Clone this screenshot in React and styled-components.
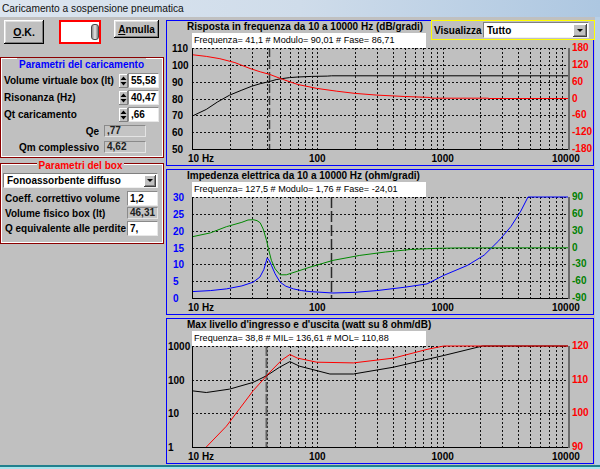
import styled, { createGlobalStyle } from "styled-components";

const FONT = `"Liberation Sans", Arial, sans-serif`;

const GlobalStyle = createGlobalStyle`
  html, body { margin: 0; padding: 0; background: #c0c0c0; }
  body { font-family: ${FONT}; }
  *, *::before, *::after { box-sizing: border-box; }
`;

const Window = styled.div`
  width: 600px;
  height: 469px;
  display: flex;
  flex-direction: column;
  overflow: hidden;
  background: #c0c0c0;
  color: #000;
  font-family: ${FONT};
`;

const TitleBar = styled.div`
  flex: none;
  height: 17px;
  display: flex;
  align-items: center;
  padding-left: 2px;
  font-size: 10.2px;
  color: #111;
  background: linear-gradient(to right, #dce5ef 0%, #cfdcea 50%, #adc7e1 100%);
`;

const Body = styled.div`
  flex: 1;
  min-height: 0;
  display: flex;
  gap: 2px;
  padding: 3px 1px 0 0;
  border-right: 5px solid #b7cfe7;
`;

const BottomEdge = styled.div`
  flex: none;
  height: 4px;
  border-top: 2px solid #21808d;
  background: #a9e4ec;
`;

/* ---------- left column ---------- */

const LeftColumn = styled.div`
  width: 164px;
  flex: none;
  display: flex;
  flex-direction: column;
`;

const ButtonRow = styled.div`
  height: 37px;
  display: flex;
  align-items: flex-start;
  padding-left: 4px;
`;

const ClassicButton = styled.button`
  width: ${p => p.$w}px;
  height: ${p => p.$h}px;
  margin: 0 0 0 ${p => p.$ml || 0}px;
  padding: 0;
  border: none;
  background: #c0c0c0;
  box-shadow: inset -1px -1px #000, inset 1px 1px #fff, inset -2px -2px #808080, inset 2px 2px #dfdfdf;
  font: bold ${p => p.$fs || 10}px ${FONT};
  color: #000;
  u { text-decoration: underline; }
`;

const RedField = styled.div`
  width: 42px;
  height: 24px;
  margin-left: 15px;
  border: 2px solid #ff0000;
  background: #fff;
  display: flex;
  align-items: center;
  justify-content: flex-end;
`;

const Knob = styled.div`
  width: 8px;
  height: 16px;
  border: 1px solid #4a4a4a;
  border-radius: 3px;
  background: linear-gradient(to right, #8c8c8c, #e6e6e6 50%, #7a7a7a);
`;

const GroupBox = styled.div`
  height: ${p => p.$h}px;
  margin-top: ${p => p.$mt || 0}px;
  padding: 0 ${p => p.$pr}px 0 ${p => p.$pl}px;
  border: 1px solid #8b0000;
  box-shadow: inset 1px 1px #fff, inset -1px -1px #fff;
  display: flex;
  flex-direction: column;
`;

const Caption = styled.div`
  align-self: center;
  height: 13px;
  line-height: 13px;
  margin-top: ${p => p.$mt || 0}px;
  margin-bottom: ${p => p.$mb || 0}px;
  padding: 0 2px;
  background: #c0c0c0;
  color: ${p => p.$color};
  font-size: 10px;
  font-weight: bold;
  white-space: nowrap;
`;

const FieldRow = styled.div`
  height: ${p => p.$h}px;
  margin-top: ${p => p.$mt || 0}px;
  padding-right: ${p => p.$pr || 0}px;
  display: flex;
  align-items: center;
  justify-content: ${p => (p.$end ? "flex-end" : "flex-start")};
`;

const Label = styled.span`
  flex: ${p => (p.$grow ? "1 1 0" : "none")};
  margin-left: ${p => p.$ml || 0}px;
  font-size: 10px;
  font-weight: bold;
  white-space: nowrap;
`;

const SpinBox = styled.span`
  width: 9px;
  height: 14px;
  flex: none;
  display: block;
  background: #c0c0c0;
  box-shadow: inset -1px -1px #808080, inset 1px 1px #fff;
  svg { display: block; }
`;

const EditBox = styled.div`
  width: 31px;
  height: 15px;
  flex: none;
  background: #fff;
  border: 1px solid #8a8a8a;
  border-right-color: #e8e8e8;
  border-bottom-color: #e8e8e8;
  padding-left: 2px;
  font-size: 10px;
  font-weight: bold;
  line-height: 13px;
  white-space: nowrap;
`;

const ValueBox = styled.div`
  width: ${p => p.$w}px;
  height: 12px;
  flex: none;
  margin-left: ${p => p.$ml || 0}px;
  background: #c4c4c4;
  border: 1px solid #8a8a8a;
  border-right-color: #e4e4e4;
  border-bottom-color: #e4e4e4;
  padding-left: 2px;
  font-size: 10px;
  font-weight: bold;
  line-height: 10px;
  color: #202020;
`;

const Combo = styled.div`
  width: ${p => p.$w}px;
  height: ${p => p.$h}px;
  flex: none;
  margin-top: ${p => p.$mt || 0}px;
  display: flex;
  align-items: center;
  justify-content: space-between;
  background: #fff;
  border: 1px solid #808080;
  border-right-color: #f0f0f0;
  border-bottom-color: #f0f0f0;
  padding: 0 1px 0 3px;
  font-size: 10px;
  font-weight: bold;
  white-space: nowrap;
`;

const ComboArrow = styled.span`
  width: ${p => p.$w}px;
  height: ${p => p.$h}px;
  flex: none;
  display: flex;
  align-items: center;
  justify-content: center;
  background: #c0c0c0;
  box-shadow: inset -1px -1px #404040, inset 1px 1px #fff, inset -2px -2px #808080;
  &::after {
    content: "";
    border-left: 3px solid transparent;
    border-right: 3px solid transparent;
    border-top: 3px solid #000;
  }
`;

/* ---------- charts ---------- */

const RightColumn = styled.div`
  width: 428px;
  flex: none;
  display: flex;
  flex-direction: column;
  gap: 3px;
`;

const ChartPanel = styled.section`
  height: 146px;
  flex: none;
  border: 1px solid #0000ff;
  display: grid;
  grid-template-columns: 426px;
  grid-template-rows: 144px;
  & > * { grid-area: 1 / 1; }
`;

const PanelTitle = styled.h2`
  margin: 0 0 0 20px;
  justify-self: start;
  align-self: start;
  font-size: 10px;
  font-weight: bold;
  line-height: 12px;
  white-space: nowrap;
`;

const Readout = styled.div`
  justify-self: start;
  align-self: start;
  margin: 12px 0 0 25px;
  width: 234px;
  height: 15px;
  padding-left: 2px;
  background: #fff;
  font-size: 9.1px;
  line-height: 15px;
  white-space: nowrap;
`;

const ViewBox = styled.div`
  justify-self: end;
  align-self: start;
  margin: -1px -2px 0 0;
  width: 164px;
  height: 20px;
  border: 1px solid #ffff00;
  background: #c0c0c0;
  display: flex;
  align-items: center;
  justify-content: space-between;
  padding: 0 5px 0 2px;
  font-size: 10px;
  font-weight: bold;
`;

const ChartSvg = styled.svg`
  display: block;
  width: 426px;
  height: 144px;
  font-family: ${FONT};
  font-weight: bold;
  font-size: 10px;
`;

const X0 = 25, X1 = 401, Y0 = 27, Y1 = 128;
const fx = f => X0 + ((X1 - X0) * Math.log10(f / 10)) / 3;
const ty = t => Y1 - (Y1 - Y0) * t;
const db = (lo, hi) => pts => pts.map(([f, v]) => [f, (v - lo) / (hi - lo)]);

const charts = [
  {
    title: "Risposta in frequenza da 10 a 10000 Hz (dB/gradi)",
    readout: "Frequenza= 41,1 # Modulo= 90,01 # Fase= 86,71",
    view: true,
    leftX: 5,
    left: ["110", "100", "90", "80", "70", "60", "50"],
    right: ["180", "120", "60", "0", "-60", "-120", "-180"],
    leftColor: "#000",
    rightColor: "#ff0000",
    cursor: { f: 41.1, color: "#3a3a3a", width: 1.5, dash: "9 3" },
    series: [
      {
        color: "#000",
        pts: db(50, 110)([
          [10, 69.5], [13, 73.5], [16, 78], [20, 82], [25, 85], [30, 87.3], [35, 88.8],
          [41, 90], [47, 91.2], [53, 91.9], [60, 92.4], [70, 92.8], [90, 93.1], [120, 93.3],
          [130, 93.5], [10000, 93.5],
        ]),
      },
      {
        color: "#ff0000",
        pts: db(-180, 180)([
          [10, 156], [13, 150], [16.7, 142], [22, 128], [29, 107], [35, 95], [41.7, 86],
          [53, 68], [70, 50], [99, 36], [143, 26], [200, 18], [298, 12], [500, 7], [780, 4],
          [820, 1], [2300, 1], [2350, 0], [10000, 0],
        ]),
      },
    ],
  },
  {
    title: "Impedenza elettrica da 10 a 10000 Hz (ohm/gradi)",
    readout: "Frequenza= 127,5 # Modulo= 1,76 # Fase= -24,01",
    leftX: 6,
    left: ["30", "25", "20", "15", "10", "5", "0"],
    right: ["90", "60", "30", "0", "-30", "-60", "-90"],
    leftColor: "#0000ff",
    rightColor: "#008000",
    cursor: { f: 127.5, color: "#2a2a2a", width: 1.5, dash: "11 3" },
    series: [
      {
        color: "#0000ff",
        pts: db(0, 30)([
          [10, 1.9], [14, 2.2], [18.8, 2.7], [25, 3.6], [30.7, 4.7], [34.8, 6.2], [37.5, 8.5],
          [39.8, 11.9], [41.5, 11], [43, 9.7], [46, 7.2], [50.5, 4.7], [56, 3.5], [64.5, 2.7],
          [75, 2.2], [87.5, 1.9], [133, 1.5], [200, 1.7], [298, 2.2], [500, 3.2], [750, 4.2],
          [1020, 6.7], [1580, 9.7], [2140, 12.7], [2800, 17], [3500, 21.2], [4200, 25.8],
          [4800, 30], [10000, 30],
        ]),
      },
      {
        color: "#008800",
        pts: db(-90, 90)([
          [10, 19], [14, 26], [18.8, 37], [25, 45], [28, 49], [30.7, 49.5], [33, 48], [35, 44],
          [37, 33], [39.3, 13], [41, -5], [43, -23], [46, -38], [50.5, -48.7], [56.5, -48.7],
          [70, -42], [87.5, -35], [133, -23], [218, -14], [350, -8], [553, -3.6], [900, -1.5],
          [1380, -0.7], [10000, -0.5],
        ]),
      },
    ],
  },
  {
    title: "Max livello d'ingresso e d'uscita (watt su 8 ohm/dB)",
    readout: "Frequenza= 38,8 # MIL= 136,61 # MOL= 110,88",
    leftX: 1,
    left: ["1000", "100", "10", "1"],
    right: ["120", "110", "100", "90"],
    leftColor: "#000",
    rightColor: "#ff0000",
    cursor: { f: 38.8, color: "#606060", width: 2, dash: "10 2" },
    series: [
      {
        color: "#000",
        pts: [
          [10, 0.556], [13, 0.54], [20, 0.573], [30.7, 0.64], [39.4, 0.706], [50, 0.79],
          [60.4, 0.846], [72, 0.8], [87.5, 0.773], [126, 0.723], [194, 0.723], [405, 0.79],
          [1020, 0.906], [2080, 1], [10000, 1],
        ],
      },
      {
        color: "#ff0000",
        pts: [
          [13, 0], [18.8, 0.206], [24, 0.38], [30.7, 0.556], [41.7, 0.74], [52, 0.86],
          [60.4, 0.916], [69.3, 0.88], [99, 0.84], [194, 0.833], [405, 0.88], [750, 0.966],
          [1020, 1], [10000, 1],
        ],
      },
    ],
  },
];

function Spin() {
  return (
    <SpinBox>
      <svg width="9" height="14" viewBox="0 0 9 14">
        <path d="M1.5 6 L4.5 2.5 L7.5 6 Z M1.5 8 L4.5 11.5 L7.5 8 Z" fill="#000" />
      </svg>
    </SpinBox>
  );
}

function Chart({ chart }) {
  const div = chart.left.length - 1;
  const step = (Y1 - Y0) / div;
  const rows = chart.left.map((_, i) => Y0 + i * step);
  const vLines = [];
  [10, 100, 1000].forEach(base => {
    for (let m = base === 10 ? 2 : 1; m <= 9; m++) vLines.push(Math.round(fx(m * base)) + 0.5);
  });
  const cx = Math.round(fx(chart.cursor.f)) + 0.5;
  return (
    <ChartSvg viewBox="0 0 426 144">
      <g stroke="#111" strokeDasharray="2 2" shapeRendering="crispEdges">
        {rows.slice(0, div).map(y => (
          <line key={y} x1={X0} x2={X1} y1={Math.round(y) + 0.5} y2={Math.round(y) + 0.5} />
        ))}
        {vLines.map(x => (
          <line key={x} x1={x} x2={x} y1={Y0} y2={Y1} />
        ))}
      </g>
      <line
        x1={cx} x2={cx} y1={Y0} y2={Y1}
        stroke={chart.cursor.color}
        strokeWidth={chart.cursor.width}
        strokeDasharray={chart.cursor.dash}
      />
      {chart.series.map(s => (
        <polyline
          key={s.color}
          points={s.pts.map(([f, t]) => `${fx(f).toFixed(1)},${ty(t).toFixed(1)}`).join(" ")}
          fill="none"
          stroke={s.color}
          strokeWidth="1"
        />
      ))}
      <g shapeRendering="crispEdges">
        <line x1={X0 + 0.5} x2={X0 + 0.5} y1={Y0} y2={Y1 + 1} stroke="#000" />
        <line x1={X0} x2={X1} y1={Y1 + 0.5} y2={Y1 + 0.5} stroke="#000" />
        <line x1={X1 + 1} x2={X1 + 1} y1={Y0} y2={Y1 + 1} stroke="#6b6b6b" strokeWidth="2" />
      </g>
      {chart.left.map((t, i) => (
        <text key={"l" + t} x={chart.leftX} y={rows[i] + 4} fill={chart.leftColor}>{t}</text>
      ))}
      {chart.right.map((t, i) => (
        <text key={"r" + t} x={405} y={rows[i] + 3} fill={chart.rightColor}>{t}</text>
      ))}
      <text x={21} y={140.5}>10 Hz</text>
      <text x={fx(100)} y={140.5} textAnchor="middle">100</text>
      <text x={fx(1000)} y={140.5} textAnchor="middle">1000</text>
      <text x={fx(10000) - 16} y={140.5}>10000</text>
    </ChartSvg>
  );
}

const loadRows = [
  { label: "Volume virtuale box (lt)", value: "55,58" },
  { label: "Risonanza (Hz)", value: "40,47" },
  { label: "Qt caricamento", value: ",66" },
];

const calcRows = [
  { label: "Qe", value: ",77" },
  { label: "Qm complessivo", value: "4,62" },
];

export default function App() {
  return (
    <>
      <GlobalStyle />
      <Window>
        <TitleBar>Caricamento a sospensione pneumatica</TitleBar>
        <Body>
          <LeftColumn>
            <ButtonRow>
              <ClassicButton $w={40} $h={24} $fs={10.5}><u>O</u>.K.</ClassicButton>
              <RedField><Knob /></RedField>
              <ClassicButton $w={45} $h={18} $ml={13}><u>A</u>nnulla</ClassicButton>
            </ButtonRow>

            <GroupBox $h={101} $pl={3} $pr={4}>
              <Caption $color="#0000ff" $mb={1}>Parametri del caricamento</Caption>
              {loadRows.map(r => (
                <FieldRow key={r.label} $h={17}>
                  <Label $grow>{r.label}</Label>
                  <Spin />
                  <EditBox>{r.value}</EditBox>
                </FieldRow>
              ))}
              {calcRows.map(r => (
                <FieldRow key={r.label} $h={16} $end $pr={13}>
                  <Label>{r.label}</Label>
                  <ValueBox $w={42} $ml={5}>{r.value}</ValueBox>
                </FieldRow>
              ))}
            </GroupBox>

            <GroupBox $h={81} $mt={5} $pl={2} $pr={5}>
              <Caption $color="#ff0000" $mt={-5}>Parametri del box</Caption>
              <Combo $w={155} $h={15} $mt={1}>
                Fonoassorbente diffuso
                <ComboArrow $w={12} $h={12} />
              </Combo>
              <FieldRow $h={15} $mt={3}>
                <Label $grow $ml={2}>Coeff. correttivo volume</Label>
                <EditBox>1,2</EditBox>
              </FieldRow>
              <FieldRow $h={12} $mt={1}>
                <Label $grow $ml={2}>Volume fisico box (lt)</Label>
                <ValueBox $w={31}>46,31</ValueBox>
              </FieldRow>
              <FieldRow $h={15} $mt={2}>
                <Label $grow $ml={2}>Q equivalente alle perdite</Label>
                <EditBox>7,</EditBox>
              </FieldRow>
            </GroupBox>
          </LeftColumn>

          <RightColumn>
            {charts.map(c => (
              <ChartPanel key={c.title}>
                <Chart chart={c} />
                <PanelTitle>{c.title}</PanelTitle>
                <Readout>{c.readout}</Readout>
                {c.view && (
                  <ViewBox>
                    Visualizza
                    <Combo $w={106} $h={16}>
                      Tutto
                      <ComboArrow $w={14} $h={13} />
                    </Combo>
                  </ViewBox>
                )}
              </ChartPanel>
            ))}
          </RightColumn>
        </Body>
        <BottomEdge />
      </Window>
    </>
  );
}
